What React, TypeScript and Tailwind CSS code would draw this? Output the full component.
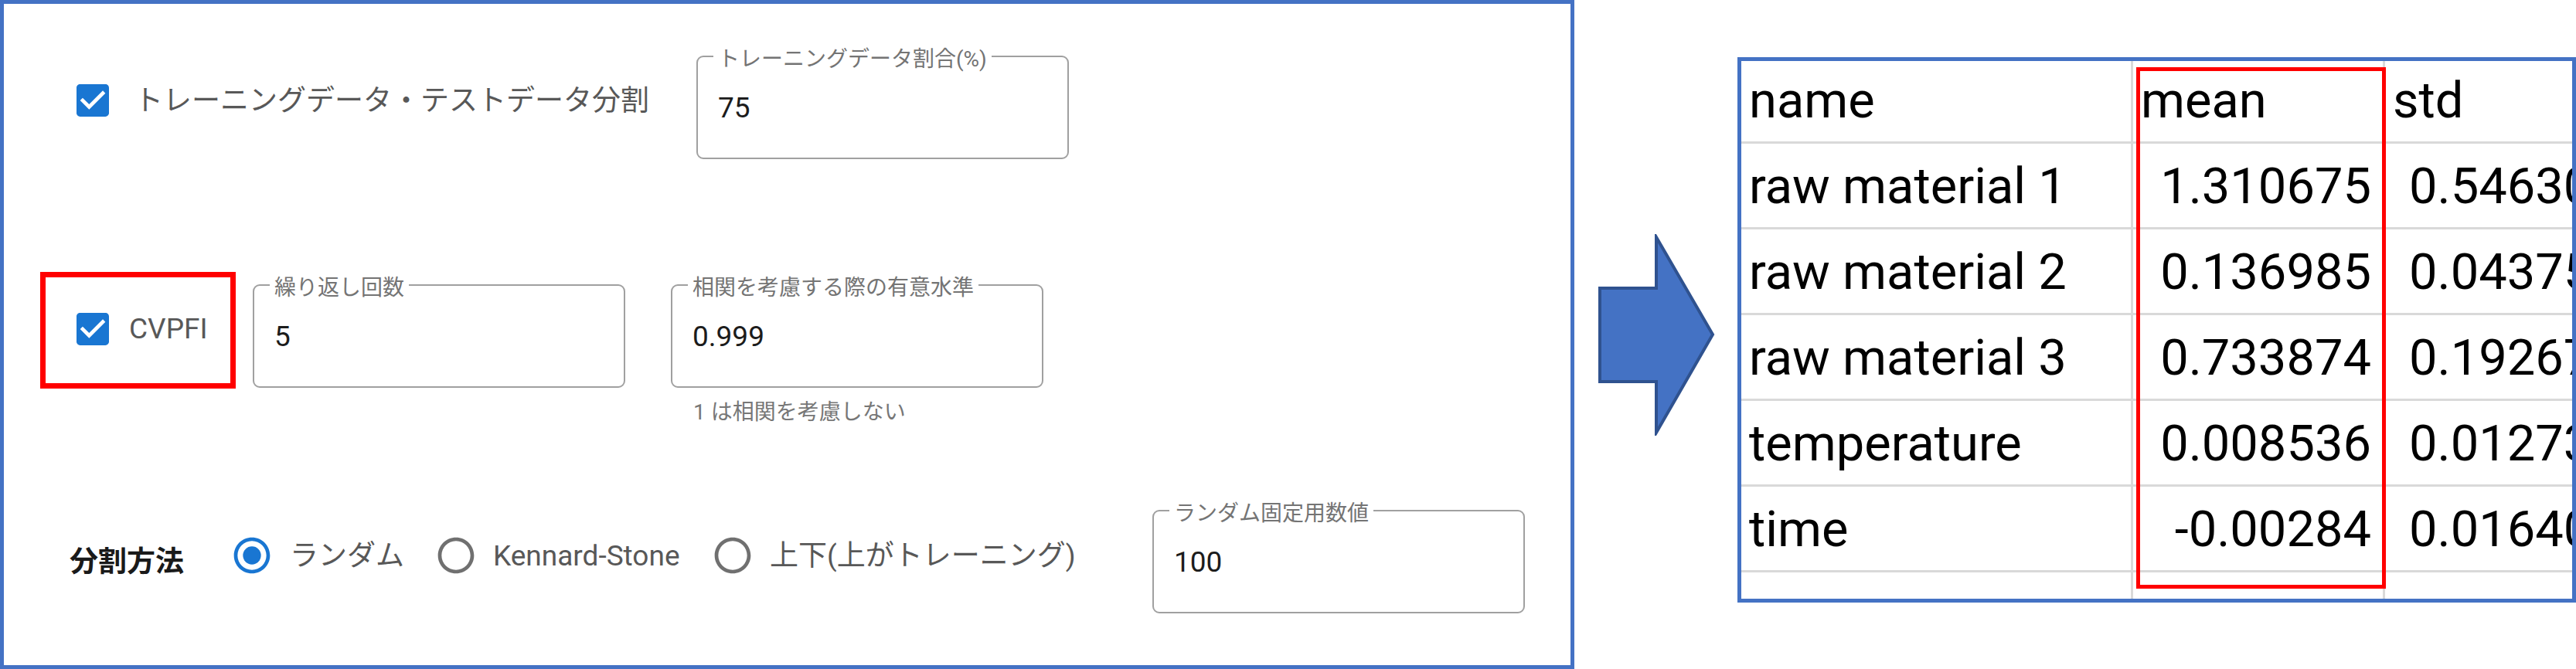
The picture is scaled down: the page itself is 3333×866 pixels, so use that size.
const CheckIcon = () => (
  <svg viewBox="0 0 24 24" className="h-[56px] w-[56px] shrink-0" fill="#1976d2">
    <path d="M19 3H5c-1.11 0-2 .9-2 2v14c0 1.1.89 2 2 2h14c1.11 0 2-.9 2-2V5c0-1.1-.89-2-2-2zm-9 14l-5-5 1.41-1.41L10 14.17l7.59-7.59L19 8l-9 9z" />
  </svg>
)

const RadioIcon = ({ checked }: { checked?: boolean }) => (
  <svg viewBox="0 0 24 24" className="h-[56px] w-[56px] shrink-0" fill={checked ? '#1976d2' : '#707070'}>
    <path d="M12 2C6.48 2 2 6.48 2 12s4.48 10 10 10 10-4.48 10-10S17.52 2 12 2zm0 18c-4.42 0-8-3.58-8-8s3.58-8 8-8 8 3.58 8 8-3.58 8-8 8z" />
    {checked && <circle cx="12" cy="12" r="5" />}
  </svg>
)

const OutlinedField = ({ label, value }: { label: string; value: string }) => (
  <div className="relative flex h-[134px] w-[482px] shrink-0 items-center rounded-[9px] border-2 border-[#a0a0a0] pl-[26px]">
    <span className="absolute -top-[11px] left-[20px] bg-white px-[6px] text-[28px] leading-none text-[#747474]">{label}</span>
    <span className="text-[37px] leading-none text-[#1c1c1c]">{value}</span>
  </div>
)

const rows = [
  ['raw material 1', '1.310675', '0.546305'],
  ['raw material 2', '0.136985', '0.043751'],
  ['raw material 3', '0.733874', '0.192671'],
  ['temperature', '0.008536', '0.012731'],
  ['time', '-0.00284', '0.016401'],
]

const cell = 'flex items-end overflow-hidden whitespace-nowrap pb-[20px] border-[#d9d9d9]'

const App = () => {
  return (
    <div className="flex h-[866px] w-[3333px] items-start overflow-hidden bg-white">

      {/* settings panel */}
      <div className="h-[866px] w-[2037px] shrink-0 border-[5px] border-[#4472c4] font-[Roboto,'Noto_Sans_CJK_JP',sans-serif]">

        <div className="mt-[67px] flex items-start pl-[87px]">
          <div className="mt-[30px] flex h-[56px] w-[809px] shrink-0 items-center">
            <CheckIcon />
            <span className="ml-[26px] text-[37px] leading-none text-[#585858]">トレーニングデータ・テストデータ分割</span>
          </div>
          <OutlinedField label="トレーニングデータ割合(%)" value="75" />
        </div>

        <div className="mt-[146px] flex h-[200px] items-start pl-[47px]">
          <div className="flex h-[151px] w-[253px] shrink-0 items-center border-[7px] border-[#ff0000] pb-[4px]">
            <div className="ml-[33px]">
              <CheckIcon />
            </div>
            <span className="ml-[19px] text-[37px] leading-none text-[#585858]">CVPFI</span>
          </div>
          <div className="ml-[22px] mt-[16px]">
            <OutlinedField label="繰り返し回数" value="5" />
          </div>
          <div className="ml-[59px] mt-[16px] flex flex-col">
            <OutlinedField label="相関を考慮する際の有意水準" value="0.999" />
            <span className="mt-[14px] pl-[29px] text-[28px] leading-[36px] text-[#777777]">1 は相関を考慮しない</span>
          </div>
        </div>

        <div className="mt-[108px] flex h-[134px] items-center pl-[85px]">
          <span className="w-[208px] shrink-0 text-[37px] font-bold leading-none text-[#1a1a1a]">分割方法</span>
          <div className="mb-[16px] flex items-center">
            <RadioIcon checked />
            <span className="ml-[21px] w-[187px] text-[37px] leading-none text-[#585858]">ランダム</span>
            <RadioIcon />
            <span className="ml-[20px] w-[282px] text-[37px] leading-none text-[#585858]">Kennard-Stone</span>
            <RadioIcon />
            <span className="ml-[20px] w-[495px] text-[37px] leading-none text-[#585858]">上下(上がトレーニング)</span>
          </div>
          <OutlinedField label="ランダム固定用数値" value="100" />
        </div>
      </div>

      {/* arrow */}
      <svg viewBox="0 0 154 261" className="ml-[29px] mt-[303px] h-[261px] w-[154px] shrink-0">
        <polygon
          points="4,70 77,70 77,4 150,130 77,257 77,191 4,191"
          fill="#4472c4"
          stroke="#2f528f"
          strokeWidth="4"
        />
      </svg>

      {/* result table */}
      <div className="relative ml-[28px] mt-[74px] h-[706px] w-[1085px] shrink-0 border-[5px] border-[#4472c4] bg-white font-[Roboto,sans-serif] text-[65px] leading-none text-black">
        <div className="grid h-full grid-cols-[507px_326px_1fr] grid-rows-[107px_repeat(5,111px)_1fr]">
          <div className={`${cell} border-b-[3px] border-r-[3px] pl-[10px]`}>name</div>
          <div className={`${cell} border-b-[3px] border-r-[3px] pl-[10px]`}>mean</div>
          <div className={`${cell} border-b-[3px] pl-[10px]`}>std</div>
          {rows.map(r => (
            <div key={r[0]} className="contents">
              <div className={`${cell} border-b-[3px] border-r-[3px] pl-[10px]`}>{r[0]}</div>
              <div className={`${cell} justify-end border-b-[3px] border-r-[3px] pr-[15px]`}>{r[1]}</div>
              <div className={`${cell} border-b-[3px] pl-[31px]`}>{r[2]}</div>
            </div>
          ))}
          <div className={`${cell} border-r-[3px]`}></div>
          <div className={`${cell} border-r-[3px]`}></div>
          <div className={cell}></div>
        </div>
        {/* highlight on the mean column */}
        <div className="absolute left-[511px] top-[8px] h-[675px] w-[323px] border-[5px] border-[#ff0000]"></div>
      </div>
    </div>
  )
}

export default App
